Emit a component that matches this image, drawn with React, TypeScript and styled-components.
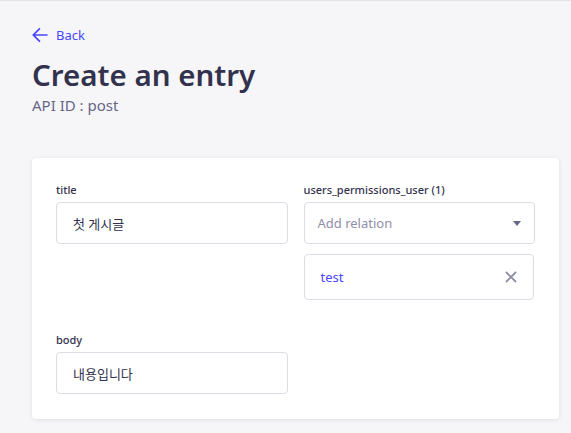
import React from "react";
import styled, { createGlobalStyle } from "styled-components";

const GlobalStyle = createGlobalStyle`
  html, body { margin: 0; padding: 0; background: #f6f6f9; }
  body { font-family: "Noto Sans", "Noto Sans CJK KR", sans-serif; color: #32324d; }
  * { box-sizing: border-box; }
`;

const Page = styled.div`
  width: 571px;
  height: 433px;
  background: #f6f6f9;
  border-top: 1px solid #e3e3e9;
  padding: 24px 12px 0 32px;
  display: flex;
  flex-direction: column;
  overflow: hidden;
`;

const BackLink = styled.a`
  display: flex;
  align-items: center;
  gap: 8px;
  color: #4945ff;
  font-size: 13px;
  line-height: 20px;
  text-decoration: none;
  height: 20px;
`;

const Title = styled.h1`
  margin: 10px 0 0;
  font-size: 29.5px;
  line-height: 40px;
  font-weight: 600;
  color: #32324d;
`;

const Subtitle = styled.div`
  font-size: 15px;
  line-height: 20px;
  color: #666687;
`;

const Card = styled.div`
  margin-top: 43px;
  background: #ffffff;
  border-radius: 4px;
  box-shadow: 0 1px 4px rgba(33, 33, 52, 0.1);
  padding: 24px 24px 25px;
  display: grid;
  grid-template-columns: 1fr 1fr;
  column-gap: 16px;
  row-gap: 32px;
`;

const Field = styled.div`
  display: flex;
  flex-direction: column;
  gap: 4px;
`;

const Label = styled.label`
  font-size: 11px;
  line-height: 16px;
  font-weight: 500;
  color: #32324d;
`;

const InputBox = styled.div`
  height: 42px;
  border: 1px solid #dcdce4;
  border-radius: 4px;
  display: flex;
  align-items: center;
  padding: 0 16px;
  font-size: 13px;
  color: #32324d;
`;

const SelectBox = styled(InputBox)`
  justify-content: space-between;
  padding: 0 13px;
  color: #8e8ea9;
`;

const RelationList = styled.div`
  display: flex;
  flex-direction: column;
  gap: 10px;
`;

const RelationItem = styled.div`
  height: 46px;
  width: calc(100% - 1px);
  border: 1px solid #dcdce4;
  border-radius: 4px;
  display: flex;
  align-items: center;
  justify-content: space-between;
  padding: 0 16px;
  font-size: 13px;
  color: #4945ff;
`;

const IconButton = styled.span`
  display: flex;
  align-items: center;
  color: #8e8ea9;
`;

export default function App() {
  return (
    <>
      <GlobalStyle />
      <Page>
        <BackLink href="#">
          <svg width="16" height="16" viewBox="0 0 24 24" fill="none">
            <path d="M22 12H3M11 3l-9 9 9 9" stroke="#4945ff" strokeWidth="2.6" strokeLinecap="square" />
          </svg>
          Back
        </BackLink>
        <Title>Create an entry</Title>
        <Subtitle>API ID : post</Subtitle>
        <Card>
          <Field>
            <Label>title</Label>
            <InputBox>첫 게시글</InputBox>
          </Field>
          <Field>
            <Label>users_permissions_user (1)</Label>
            <RelationList>
              <SelectBox>
                Add relation
                <svg width="8" height="5" viewBox="0 0 8 5">
                  <path d="M0 0h8L4 5z" fill="#666687" />
                </svg>
              </SelectBox>
              <RelationItem>
                test
                <IconButton>
                  <svg width="12" height="12" viewBox="0 0 12 12">
                    <path d="M1 1l10 10M11 1L1 11" stroke="#8e8ea9" strokeWidth="1.8" />
                  </svg>
                </IconButton>
              </RelationItem>
            </RelationList>
          </Field>
          <Field>
            <Label>body</Label>
            <InputBox>내용입니다</InputBox>
          </Field>
        </Card>
      </Page>
    </>
  );
}
